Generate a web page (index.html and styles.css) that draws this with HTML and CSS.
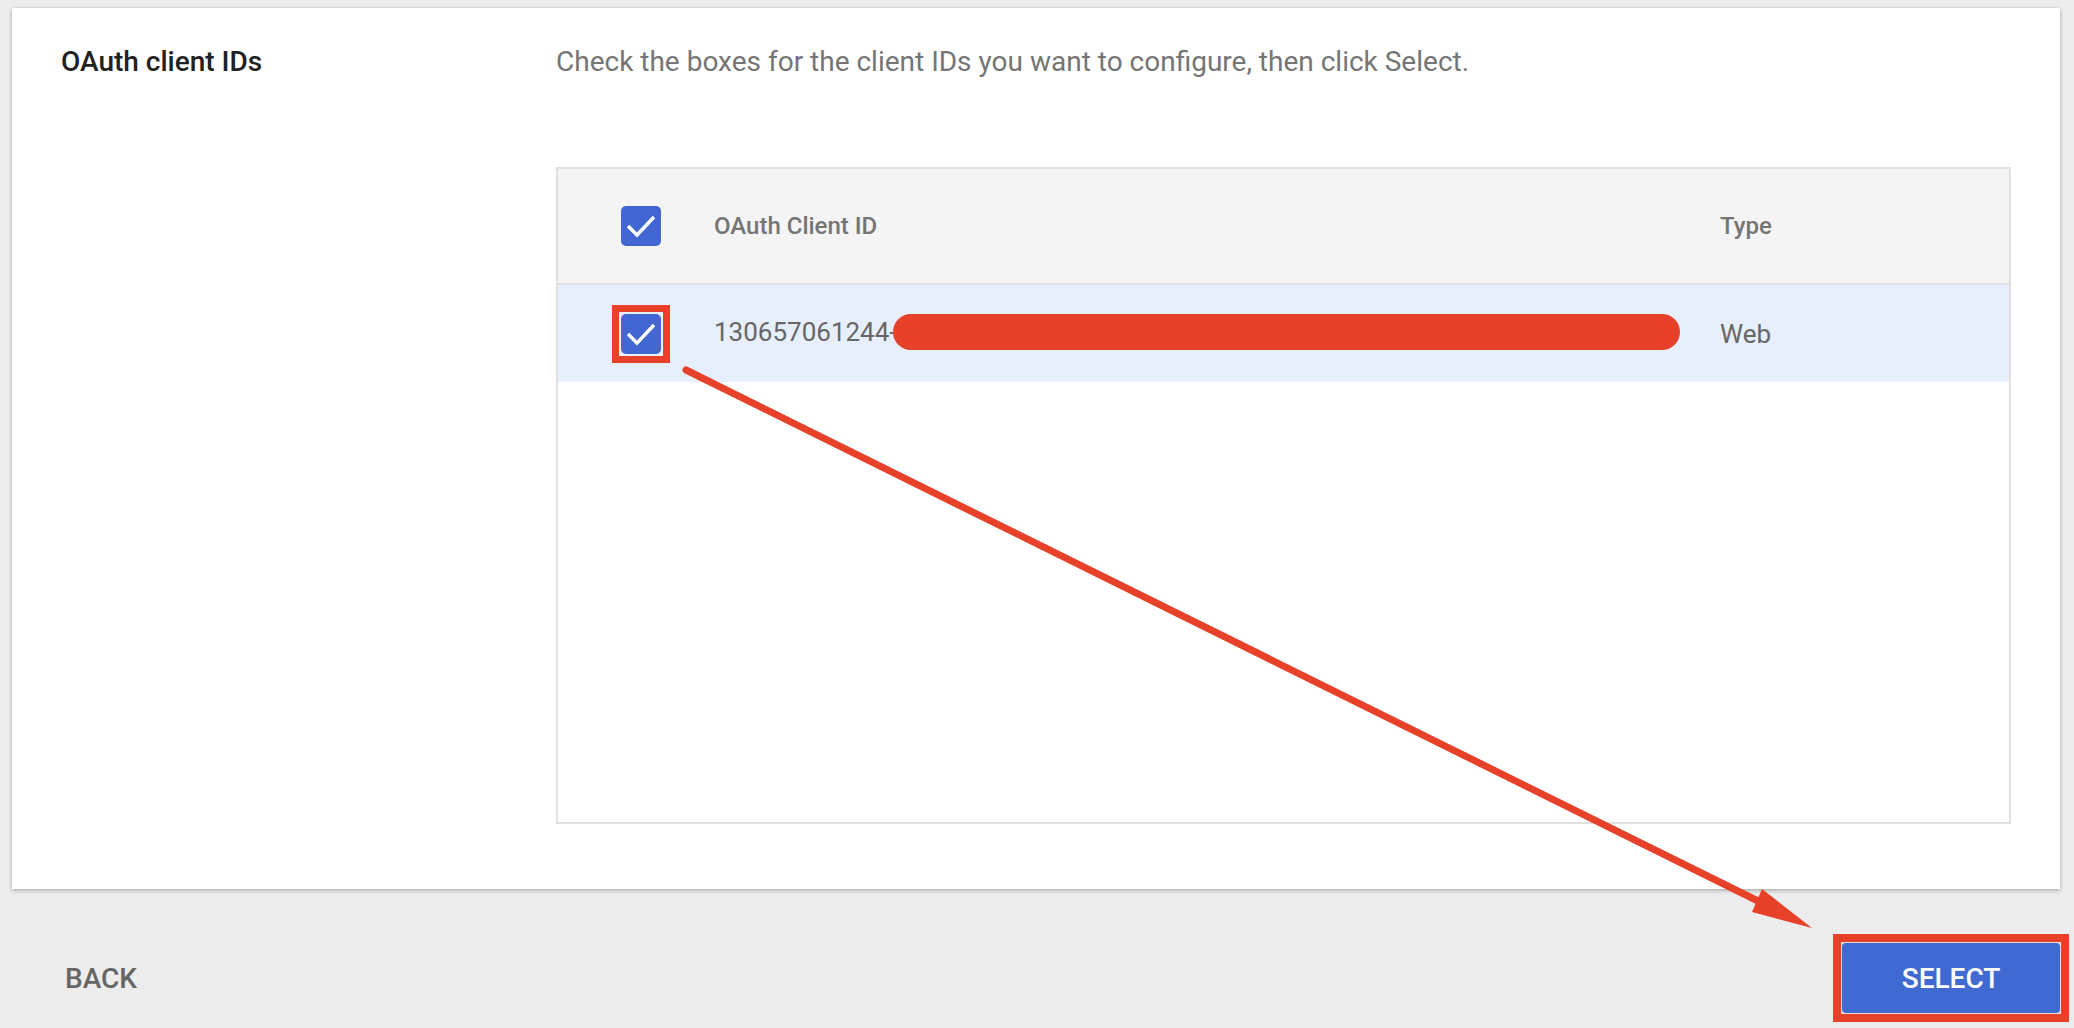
FILE: index.html
```html
<!DOCTYPE html>
<html lang="en">
<head>
<meta charset="utf-8">
<title>OAuth client IDs</title>
<link rel="stylesheet" href="styles.css">
</head>
<body>
<div class="page">
  <section class="card">
    <h2 class="card-title">OAuth client IDs</h2>
    <div class="card-body">
      <p class="desc">Check the boxes for the client IDs you want to configure, then click Select.</p>
      <div class="table">
        <div class="row head">
          <div class="cell check">
            <span class="cb"><svg width="40" height="40" viewBox="0 0 40 40"><rect width="40" height="40" rx="5" fill="#4267d3"/><path d="M7 20 L16 29 L33 11" fill="none" stroke="#fff" stroke-width="3.4"/></svg></span>
          </div>
          <div class="cell">OAuth Client ID</div>
          <div class="cell">Type</div>
        </div>
        <div class="row data">
          <div class="cell check">
            <span class="cb marked"><svg width="40" height="40" viewBox="0 0 40 40"><rect width="40" height="40" rx="5" fill="#4267d3"/><path d="M7 20 L16 29 L33 11" fill="none" stroke="#fff" stroke-width="3.4"/></svg></span>
          </div>
          <div class="cell">130657061244-<span class="redact"></span></div>
          <div class="cell">Web</div>
        </div>
      </div>
    </div>
  </section>
  <footer class="actions">
    <span class="back">BACK</span>
    <span class="highlight"><button class="select">SELECT</button></span>
  </footer>
</div>
<svg class="annot" width="2074" height="1028" viewBox="0 0 2074 1028">
  <line x1="686" y1="370" x2="1762" y2="903" stroke="#e8412a" stroke-width="7" stroke-linecap="round"/>
  <polygon points="1762,889 1752,912 1812,928" fill="#e8412a"/>
</svg>
</body>
</html>
```
FILE: styles.css
```css
html, body {
  margin: 0;
  padding: 0;
  background: #ececec;
  font-family: Roboto, "Liberation Sans", Arial, sans-serif;
  width: 2074px;
  height: 1028px;
  overflow: hidden;
}

.page {
  padding: 8px 14px 0 12px;
}

.card {
  background: #fff;
  box-shadow: 0 2px 4px rgba(0, 0, 0, 0.22), 0 0 3px rgba(0, 0, 0, 0.12);
  padding: 36px 49px 65px 49px;
  display: grid;
  grid-template-columns: 495px 1fr;
}

.card-title {
  margin: 0;
  font-size: 28px;
  line-height: 36px;
  font-weight: 500;
  color: #212121;
}

.desc {
  margin: 0 0 87px 0;
  font-size: 28px;
  line-height: 36px;
  color: #757575;
}

.table {
  border: 2px solid #e0e0e0;
  height: 657px;
  box-sizing: border-box;
}

.row {
  display: grid;
  grid-template-columns: 156px 1006px 1fr;
  align-items: center;
}

.row.head {
  background: #f4f4f4;
  height: 116px;
  box-sizing: border-box;
  border-bottom: 2px solid #e0e0e0;
  font-size: 24px;
  font-weight: 500;
  color: #757575;
}

.row.data {
  background: #e8effc;
  height: 97px;
  font-size: 26px;
  color: #666;
}

.cell {
  white-space: nowrap;
}

.check {
  padding-left: 63px;
  display: flex;
  align-items: center;
}

.cb {
  display: block;
  width: 40px;
  height: 40px;
}

.cb svg {
  display: block;
}

.cb.marked {
  outline: 7px solid #e8412a;
  outline-offset: 2px;
}

.redact {
  display: inline-block;
  vertical-align: middle;
  width: 787px;
  height: 36px;
  margin-left: -4px;
  margin-top: -4px;
  border-radius: 18px;
  background: #e8412a;
}

.actions {
  margin-top: 45px;
  margin-right: -9px;
  padding-left: 53px;
  display: flex;
  justify-content: space-between;
  align-items: center;
}

.back {
  font-size: 28px;
  font-weight: 500;
  color: #666;
}

.highlight {
  display: block;
  border: 8px solid #e8412a;
  padding: 1px;
  background: #e6dcd8;
}

.select {
  display: block;
  width: 218px;
  height: 70px;
  border: none;
  border-radius: 4px;
  background: #4169d2;
  color: #fff;
  font-family: Roboto, "Liberation Sans", Arial, sans-serif;
  font-size: 28px;
  font-weight: 500;
}

.annot {
  position: absolute;
  top: 0;
  left: 0;
  pointer-events: none;
}
```
